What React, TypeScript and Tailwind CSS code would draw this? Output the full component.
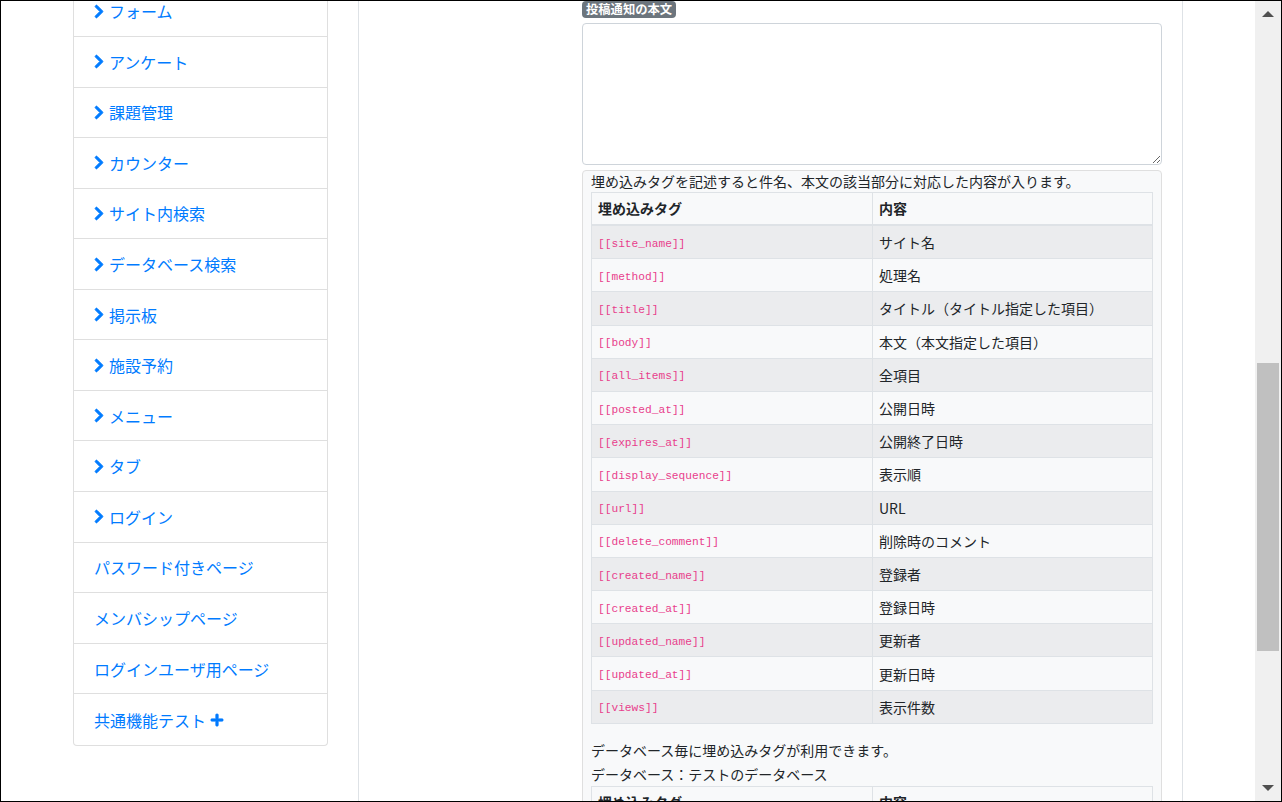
import React from "react";
import { FaChevronRight, FaPlus } from "react-icons/fa";

const menu: { label: string; chevron: boolean; plus?: boolean }[] = [
  { label: "フォーム", chevron: true },
  { label: "アンケート", chevron: true },
  { label: "課題管理", chevron: true },
  { label: "カウンター", chevron: true },
  { label: "サイト内検索", chevron: true },
  { label: "データベース検索", chevron: true },
  { label: "掲示板", chevron: true },
  { label: "施設予約", chevron: true },
  { label: "メニュー", chevron: true },
  { label: "タブ", chevron: true },
  { label: "ログイン", chevron: true },
  { label: "パスワード付きページ", chevron: false },
  { label: "メンバシップページ", chevron: false },
  { label: "ログインユーザ用ページ", chevron: false },
  { label: "共通機能テスト", chevron: false, plus: true },
];

const tags: [string, string][] = [
  ["site_name", "サイト名"],
  ["method", "処理名"],
  ["title", "タイトル（タイトル指定した項目）"],
  ["body", "本文（本文指定した項目）"],
  ["all_items", "全項目"],
  ["posted_at", "公開日時"],
  ["expires_at", "公開終了日時"],
  ["display_sequence", "表示順"],
  ["url", "URL"],
  ["delete_comment", "削除時のコメント"],
  ["created_name", "登録者"],
  ["created_at", "登録日時"],
  ["updated_name", "更新者"],
  ["updated_at", "更新日時"],
  ["views", "表示件数"],
];

function TableHeader() {
  return (
    <div className="grid grid-cols-2 border-t border-b-2 border-[#dee2e6] h-[34px] font-bold text-[14px]">
      <div className="flex items-center px-[6px]">埋め込みタグ</div>
      <div className="flex items-center px-[6px] border-l border-[#dee2e6]">内容</div>
    </div>
  );
}

export default function App() {
  return (
    <div className="w-[1282px] h-[802px] border border-black overflow-hidden flex bg-white font-['Noto_Sans_CJK_JP','Noto_Sans',sans-serif] text-[#212529]">
      <div className="flex-1 flex overflow-hidden">
        {/* left column */}
        <div className="w-[357px] shrink-0">
          <div className="ml-[72px] w-[255px] mt-[-14.6px] border border-[#dfdfdf] border-t-0 rounded-b-[4px] bg-white">
            {menu.map((m, i) => (
              <div
                key={m.label}
                className={
                  "h-[50.57px] flex items-center px-5 text-[16px] text-[#007bff] " +
                  (i < menu.length - 1 ? "border-b border-[#dfdfdf]" : "")
                }
              >
                {m.chevron && (
                  <FaChevronRight
                    stroke="currentColor"
                    strokeWidth={30}
                    className="w-[10px] h-[15px] mr-[5px] shrink-0"
                  />
                )}
                <span>{m.label}</span>
                {m.plus && (
                  <FaPlus
                    stroke="currentColor"
                    strokeWidth={20}
                    className="w-[14px] h-[14px] ml-[4px]"
                  />
                )}
              </div>
            ))}
          </div>
        </div>

        {/* main column */}
        <div className="w-[825px] shrink-0 border-l border-r border-[#dee2e6] pl-[223px] pr-[20px]">
          <div className="flex">
            <span className="inline-flex items-center h-[17px] px-[4px] rounded-[4px] bg-[#6c757d] text-white text-[12.3px] font-bold leading-none">
              投稿通知の本文
            </span>
          </div>
          <textarea className="block mt-[5px] w-full h-[142px] border border-[#ced4da] rounded-[4px] bg-white outline-none" />
          <div className="mt-[5px] border border-[#dfdfdf] rounded-[4px] bg-[#f8f9fa] px-2">
            <div className="text-[14px] leading-[21px]">
              埋め込みタグを記述すると件名、本文の該当部分に対応した内容が入ります。
            </div>
            <div className="border-l border-r border-[#dee2e6]">
              <TableHeader />
              {tags.map(([tag, desc], i) => (
                <div
                  key={tag}
                  className={
                    "grid grid-cols-2 h-[33.2px] border-b border-[#dee2e6] " +
                    (i % 2 === 0 ? "bg-[#ebecee]" : "bg-[#f8f9fa]")
                  }
                >
                  <div className="flex items-center px-[6px] pt-[4px]">
                    <code className="font-['Liberation_Mono',monospace] text-[11.2px] text-[#e83e8c]">
                      [[{tag}]]
                    </code>
                  </div>
                  <div className="flex items-center px-[6px] pt-[1px] border-l border-[#dee2e6] text-[14px]">
                    {desc}
                  </div>
                </div>
              ))}
            </div>
            <div className="mt-4 text-[14px] leading-[21px]">
              データベース毎に埋め込みタグが利用できます。
            </div>
            <div className="mt-[3px] text-[14px] leading-[21px]">
              データベース：テストのデータベース
            </div>
            <div className="mt-[1px] border-l border-r border-[#dee2e6]">
              <TableHeader />
            </div>
          </div>
        </div>
        <div className="flex-1" />
      </div>

      {/* scrollbar */}
      <div className="w-[26px] shrink-0 bg-[#f0f0f0] flex flex-col">
        <div className="h-[26px] flex items-center justify-center">
          <div className="w-0 h-0 border-l-[6px] border-r-[6px] border-b-[6px] border-l-transparent border-r-transparent border-b-[#505050]" />
        </div>
        <div className="flex-1">
          <div className="mt-[336px] mx-[2px] h-[288px] bg-[#c0c0c0]" />
        </div>
        <div className="h-[26px] flex items-center justify-center">
          <div className="w-0 h-0 border-l-[6px] border-r-[6px] border-t-[6px] border-l-transparent border-r-transparent border-t-[#505050]" />
        </div>
      </div>
    </div>
  );
}
